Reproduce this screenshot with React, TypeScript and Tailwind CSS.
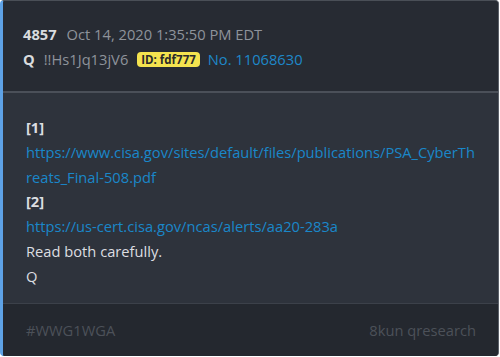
import React from "react";

export default function App() {
  return (
    <div className="w-[500px] h-[357px] bg-white" style={{ fontFamily: '"Open Sans", "Noto Sans", sans-serif' }}>
      <div className="w-[499px] h-[356px] flex flex-col rounded-[4px] overflow-hidden border-l-[3px] border-l-[#5ea2e6] border-r border-r-[#5b6069] border-t border-t-[#4a4f57] bg-[#2e333c]">
        <div className="bg-[#272b33] pl-[20px] pt-[21px] pb-[19px] text-[14.7px] leading-[25px] border-b-2 border-b-[#4b5059]">
          <div className="flex items-center gap-[10px]">
            <span className="font-bold text-[#d9dbde]">4857</span>
            <span className="text-[#8e939b]">Oct 14, 2020 1:35:50 PM EDT</span>
          </div>
          <div className="flex items-center">
            <span className="font-bold text-[#d9dbde]">Q</span>
            <span className="text-[#8e939b] ml-[9px]">!!Hs1Jq13jV6</span>
            <span className="ml-[9px] bg-[#f4e34f] text-[#2a2a2a] font-bold text-[11.5px] leading-[15px] px-[4px] rounded-[4px]">ID: fdf777</span>
            <span className="ml-[8px] text-[#1e88c9]">No. 11068630</span>
          </div>
        </div>
        <div className="flex-1 pl-[23px] pr-[22px] pt-[22px] text-[14.7px] leading-[24.8px] text-[#dcdee1] break-all">
          <div className="font-bold">[1]</div>
          <div className="text-[#1a87c9]">https://www.cisa.gov/sites/default/files/publications/PSA_CyberThreats_Final-508.pdf</div>
          <div className="font-bold">[2]</div>
          <div className="text-[#1a87c9]">https://us-cert.cisa.gov/ncas/alerts/aa20-283a</div>
          <div>Read both carefully.</div>
          <div>Q</div>
        </div>
        <div className="h-[53px] bg-[#24282f] border-t border-t-[#3c414a] flex items-center justify-between pl-[23px] pr-[22px] text-[14.7px] text-[#4c5159]">
          <span>#WWG1WGA</span>
          <span>8kun qresearch</span>
        </div>
      </div>
    </div>
  );
}
